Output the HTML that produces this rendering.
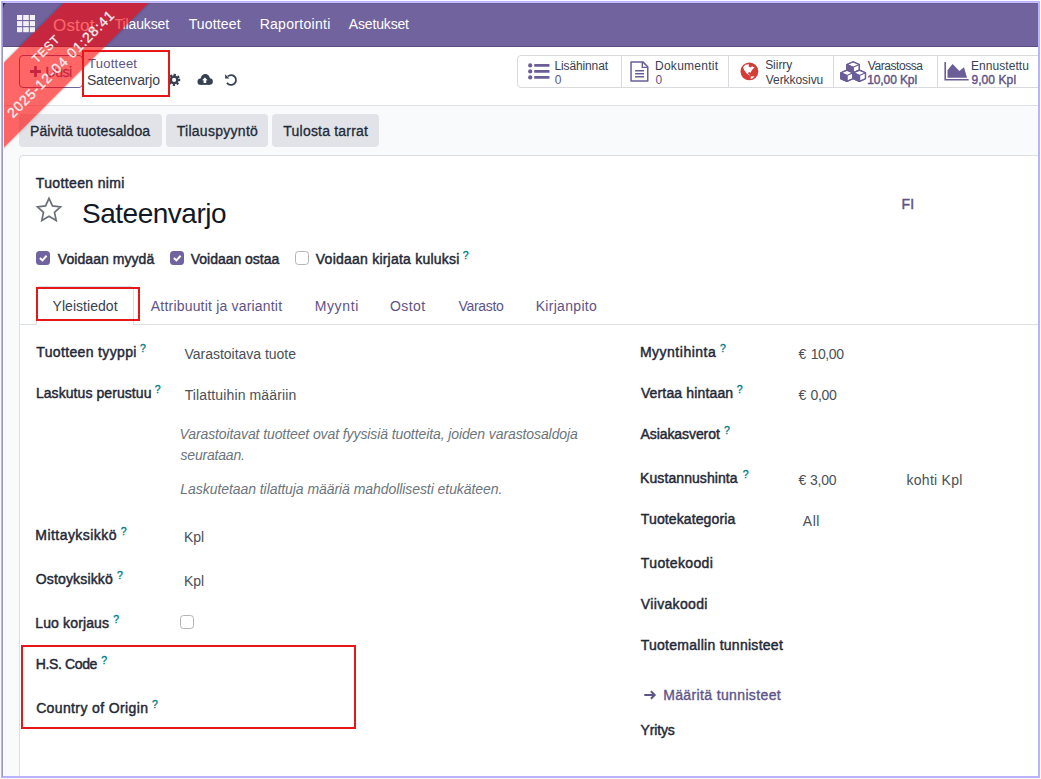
<!DOCTYPE html>
<html lang="fi">
<head>
<meta charset="utf-8">
<title>Sateenvarjo - Odoo</title>
<style>
html,body{margin:0;padding:0;background:#faf9ff;}
body{width:1041px;height:779px;position:relative;overflow:hidden;font-family:"Liberation Sans",sans-serif;}
#clip{position:absolute;left:3px;top:3px;width:1035px;height:773px;overflow:hidden;}
#stage{position:absolute;left:-3px;top:-3px;width:1041px;height:779px;}
#frame{position:absolute;left:1px;top:1px;width:1035px;height:773px;border:2px solid #b9b2ff;z-index:50;pointer-events:none;}
.abs,.t,svg{position:absolute;}
.t{white-space:nowrap;}
#nav{left:0;top:3px;width:1041px;height:44px;background:#71639e;box-sizing:border-box;border-bottom:1px solid #5a4e83;border-top:1px solid #6a5c99;}
#cp{left:0;top:47px;width:1041px;height:58px;background:#fff;border-bottom:1px solid #dcdfe3;}
#bg{left:0;top:106px;width:1041px;height:680px;background:#f9fafb;}
.sbtn{top:114px;height:33px;background:#e1e3e8;border-radius:4px;}
#sheet{left:19px;top:155px;width:1100px;height:700px;background:#fff;border:1px solid #dcdfe3;border-radius:4px;box-sizing:border-box;}
#new{left:19px;top:55px;width:63.500px;height:33px;box-sizing:border-box;border:1px solid #71639e;border-radius:4px;background:#fff;}
#stat{left:517px;top:55px;width:560px;height:33px;box-sizing:border-box;border:1px solid #d8dadd;border-radius:4px;background:#fff;}
.div{top:56px;width:1px;height:31px;background:#d8dadd;}
.red{box-sizing:border-box;border:2.300px solid #e61719;}
.cb{width:14px;height:14px;box-sizing:border-box;border-radius:3.5px;}
.cb.on{background:#71639e;}
.cb.off{background:#fff;border:1px solid #b4b4b6;}
#tabline{left:20px;top:324px;width:1030px;height:1px;background:#dcdfe3;}
#tab{left:36px;top:286px;width:98px;height:39px;box-sizing:border-box;border:1px solid #dcdfe3;border-bottom:none;background:#fff;border-radius:4px 4px 0 0;}
#ribbon{left:-97.300px;top:25.700px;width:300px;height:60px;background:rgba(255,0,0,.6);transform:rotate(-45deg);color:#f0f0f0;text-align:center;letter-spacing:.800px;-webkit-text-stroke:.300px #f0f0f0;box-shadow:0 0 3px rgba(0,0,0,.3);}
#ribbon div{position:absolute;left:0;width:300px;white-space:nowrap;}
</style>
</head>
<body>
<div id="clip"><div id="stage">

<!-- backgrounds -->
<div class="abs" id="nav"></div>
<div class="abs" id="cp"></div>
<div class="abs" id="bg"></div>

<!-- navbar apps icon -->
<svg style="left:17px;top:15px" width="18" height="18" viewBox="0 0 18 18"><g fill="#f1f0f6">
<rect x="0" y="0" width="5.2" height="5"/><rect x="6.2" y="0" width="5.6" height="5"/><rect x="12.8" y="0" width="5.2" height="5"/>
<rect x="0" y="6.1" width="5.2" height="5"/><rect x="6.2" y="6.1" width="5.6" height="5"/><rect x="12.8" y="6.1" width="5.2" height="5"/>
<rect x="0" y="12.2" width="5.2" height="5"/><rect x="6.2" y="12.2" width="5.6" height="5"/><rect x="12.8" y="12.2" width="5.2" height="5"/>
</g></svg>
<svg style="left:3px;top:3px" width="4" height="6" viewBox="0 0 4 6"><path d="M0 0H3L0.8 2L0 6Z" fill="#2b2733"/></svg>

<!-- "new" button -->
<div class="abs" id="new"></div>
<svg style="left:30px;top:66px" width="11" height="11" viewBox="0 0 11 11"><path d="M4.1 0h2.8v4.1H11v2.8H6.9V11H4.1V6.9H0V4.1h4.1z" fill="#71639e"/></svg>
<div class="t under" style="left:45.50px;top:62.02px;font-size:14px;line-height:20px;color:#71639e;letter-spacing:-0.429px;-webkit-text-stroke:0.3px #71639e;">Uusi</div>

<!-- control panel action icons -->
<svg style="left:167px;top:73px" width="14" height="14" viewBox="0 0 14 14"><g fill="none" stroke="#374151">
<circle cx="7.1" cy="6.9" r="4.9" stroke-width="2.5" stroke-dasharray="2.05 1.8" transform="rotate(-12 7.1 6.9)"/>
<circle cx="7.1" cy="6.9" r="3.3" stroke-width="2.5"/></g></svg>
<svg style="left:197px;top:73px" width="17" height="13" viewBox="0 0 17 13"><g fill="#374151"><circle cx="3.700" cy="8.650" r="3.200"/><circle cx="8.300" cy="5.700" r="4.600"/><circle cx="12.600" cy="8.600" r="3.250"/><rect x="3.700" y="6" width="8.900" height="5.850"/></g><path d="M7.850 4.500l2.750 2.800H9.200v2.700H6.600V7.300H5.100z" fill="#fff"/></svg>
<svg style="left:224px;top:73px" width="14" height="14" viewBox="0 0 14 14"><path d="M3.800 3.400A4.900 4.900 0 1 1 3.000 9.700" fill="none" stroke="#374151" stroke-width="1.8"/><path d="M1.100 1.300v4.300h4.300z" fill="#374151"/></svg>

<!-- stat buttons -->
<div class="abs" id="stat"></div>
<div class="abs div" style="left:621px"></div>
<div class="abs div" style="left:728px"></div>
<div class="abs div" style="left:833px"></div>
<div class="abs div" style="left:937px"></div>
<svg style="left:528px;top:63px" width="22" height="17" viewBox="0 0 22 17"><g fill="#6b5e98">
<circle cx="2.2" cy="2.4" r="2.1"/><circle cx="2.2" cy="8.4" r="2.1"/><circle cx="2.2" cy="14.4" r="2.1"/>
<rect x="6.2" y="1" width="15.3" height="2.8" rx=".6"/><rect x="6.2" y="7" width="15.3" height="2.8" rx=".6"/><rect x="6.2" y="13" width="15.3" height="2.8" rx=".6"/></g></svg>
<svg style="left:630px;top:61px" width="19" height="21" viewBox="0 0 19 21"><g fill="none" stroke="#6b5e98">
<path d="M1.050 0.900H12.900L17.750 5.700V19.950H1.050z" stroke-width="1.5" stroke-linejoin="round"/><path d="M12.300 1v5.400h5.300" stroke-width="1.4"/>
<path d="M5.100 9.800h8.900M5.100 12.750h8.900M5.100 15.800h8.900" stroke-width="1.4"/></g></svg>
<svg style="left:740px;top:61.600px" width="19" height="19" viewBox="0 0 19 19"><circle cx="9.400" cy="9.400" r="8.900" fill="#d63c37"/>
<path d="M3.000 5.300L5.400 2.700 9.000 2.200 8.600 4.500 10.800 5.400 11.900 4.200 14.700 5.400 12.600 7.200 11.100 9.400 10.800 10.800 9.000 10.100 7.900 11.200 9.300 12.600 10.400 13.700 7.200 11.900 4.600 8.700 3.700 6.900z" fill="#fff"/>
<path d="M10.800 14.400l3.900-.2-2.500 2.400-1.600.3z" fill="#fff"/></svg>
<svg style="left:840px;top:61px" width="27" height="21" viewBox="0 0 27 21"><g stroke="#6b5e98" stroke-width="1.25" stroke-linejoin="round"><path d="M13.10 0.70L19.30 3.50V9.10L13.10 11.90L6.90 9.10V3.50Z" fill="#fff"/><path d="M6.90 3.50L13.10 6.30V11.90L6.90 9.10Z" fill="#6b5e98"/><path d="M13.10 0.70L19.30 3.50V9.10L13.10 11.90L6.90 9.10V3.50ZM13.10 0.70L19.30 3.50L13.10 6.30L6.90 3.50ZM13.10 6.30V11.90" fill="none"/><path d="M6.90 9.10L12.90 11.80V17.70L6.90 20.40L0.90 17.70V11.80Z" fill="#fff"/><path d="M0.90 11.80L6.90 14.50V20.40L0.90 17.70Z" fill="#6b5e98"/><path d="M6.90 9.10L12.90 11.80V17.70L6.90 20.40L0.90 17.70V11.80ZM6.90 9.10L12.90 11.80L6.90 14.50L0.90 11.80ZM6.90 14.50V20.40" fill="none"/><path d="M19.50 9.10L25.50 11.80V17.70L19.50 20.40L13.50 17.70V11.80Z" fill="#fff"/><path d="M13.50 11.80L19.50 14.50V20.40L13.50 17.70Z" fill="#6b5e98"/><path d="M19.50 9.10L25.50 11.80V17.70L19.50 20.40L13.50 17.70V11.80ZM19.50 9.10L25.50 11.80L19.50 14.50L13.50 11.80ZM19.50 14.50V20.40" fill="none"/></g></svg>
<svg style="left:944px;top:62px" width="26" height="19" viewBox="0 0 26 19"><path d="M1.200 0v17.700h23.500" fill="none" stroke="#6b5e98" stroke-width="1.6"/><path d="M3.500 8.250L8.600 2.100 15.400 8.900 20.000 5.300 23.000 15.700H3.500z" fill="#6b5e98"/></svg>

<!-- action buttons -->
<div class="abs sbtn" style="left:19px;width:143px"></div>
<div class="abs sbtn" style="left:166px;width:102px"></div>
<div class="abs sbtn" style="left:272px;width:107px"></div>

<!-- form sheet -->
<div class="abs" id="sheet"></div>
<svg style="left:35px;top:196.400px" width="28" height="27" viewBox="0 0 28 27"><path d="M14 2.400l3.450 7.500 8.100 1-6.050 5.500 1.700 8.100-7.200-4.150-7.200 4.150 1.700-8.100-6.050-5.500 8.100-1z" fill="none" stroke="#6c7078" stroke-width="1.700" stroke-linejoin="miter"/></svg>
<div class="abs cb on" style="left:36px;top:251px"></div>
<svg style="left:36px;top:251px" width="14" height="14" viewBox="0 0 14 14"><path d="M3.900 7.000L6.400 9.450 10.600 4.750" fill="none" stroke="#fff" stroke-width="1.900" stroke-linecap="butt" stroke-linejoin="miter"/></svg>
<div class="abs cb on" style="left:169.5px;top:251px"></div>
<svg style="left:169.5px;top:251px" width="14" height="14" viewBox="0 0 14 14"><path d="M3.900 7.000L6.400 9.450 10.600 4.750" fill="none" stroke="#fff" stroke-width="1.900" stroke-linecap="butt" stroke-linejoin="miter"/></svg>
<div class="abs cb off" style="left:295px;top:251px"></div>
<div class="abs cb off" style="left:180px;top:615px"></div>
<div class="abs" id="tabline"></div>
<div class="abs" id="tab"></div>
<svg style="left:644px;top:689px" width="13" height="12" viewBox="0 0 13 12"><path d="M0.300 6H10.800M6.900 2.200L10.700 6 6.900 9.800" fill="none" stroke="#5e5387" stroke-width="2" stroke-linejoin="miter"/></svg>

<div class="t" style="left:52.97px;top:13.98px;font-size:17px;line-height:24px;color:#ffffff;letter-spacing:0.210px;">Ostot</div>
<div class="t" style="left:114.69px;top:14.02px;font-size:14px;line-height:20px;color:#ffffff;letter-spacing:-0.146px;">Tilaukset</div>
<div class="t" style="left:188.69px;top:14.02px;font-size:14px;line-height:20px;color:#ffffff;letter-spacing:0.152px;">Tuotteet</div>
<div class="t" style="left:259.64px;top:14.02px;font-size:14px;line-height:20px;color:#ffffff;letter-spacing:0.294px;">Raportointi</div>
<div class="t" style="left:348.78px;top:14.02px;font-size:14px;line-height:20px;color:#ffffff;letter-spacing:-0.154px;">Asetukset</div>
<div class="t" style="left:88.12px;top:55.02px;font-size:13px;line-height:18px;color:#5e5387;letter-spacing:0.234px;">Tuotteet</div>
<div class="t" style="left:86.89px;top:70.02px;font-size:14px;line-height:20px;color:#374151;letter-spacing:-0.150px;">Sateenvarjo</div>
<div class="t" style="left:554.48px;top:58.02px;font-size:12px;line-height:17px;color:#374151;letter-spacing:-0.129px;">Lisähinnat</div>
<div class="t" style="left:554.78px;top:72.02px;font-size:12px;line-height:17px;color:#5e5387;">0</div>
<div class="t" style="left:655.03px;top:58.02px;font-size:12px;line-height:17px;color:#374151;letter-spacing:0.257px;">Dokumentit</div>
<div class="t" style="left:655.49px;top:72.02px;font-size:12px;line-height:17px;color:#5e5387;">0</div>
<div class="t" style="left:765.16px;top:57.02px;font-size:12px;line-height:17px;color:#374151;letter-spacing:-0.037px;">Siirry</div>
<div class="t" style="left:765.75px;top:72.02px;font-size:12px;line-height:17px;color:#374151;letter-spacing:-0.059px;">Verkkosivu</div>
<div class="t" style="left:867.75px;top:58.02px;font-size:12px;line-height:17px;color:#374151;letter-spacing:-0.440px;">Varastossa</div>
<div class="t" style="left:867.26px;top:72.02px;font-size:12px;line-height:17px;color:#5e5387;letter-spacing:-0.113px;-webkit-text-stroke:0.4px #5e5387;">10,00 Kpl</div>
<div class="t" style="left:971.03px;top:58.02px;font-size:12px;line-height:17px;color:#374151;letter-spacing:0.053px;">Ennustettu</div>
<div class="t" style="left:971.40px;top:72.02px;font-size:12px;line-height:17px;color:#5e5387;letter-spacing:0.090px;-webkit-text-stroke:0.4px #5e5387;">9,00 Kpl</div>
<div class="t" style="left:30.05px;top:121.02px;font-size:14px;line-height:20px;color:#1f2937;letter-spacing:0.099px;-webkit-text-stroke:0.3px #1f2937;">Päivitä tuotesaldoa</div>
<div class="t" style="left:176.73px;top:121.02px;font-size:14px;line-height:20px;color:#1f2937;letter-spacing:0.276px;-webkit-text-stroke:0.3px #1f2937;">Tilauspyyntö</div>
<div class="t" style="left:283.36px;top:121.02px;font-size:14px;line-height:20px;color:#1f2937;letter-spacing:0.204px;-webkit-text-stroke:0.3px #1f2937;">Tulosta tarrat</div>
<div class="t" style="left:35.84px;top:173.02px;font-size:14px;line-height:20px;color:#1f2937;letter-spacing:0.357px;-webkit-text-stroke:0.45px #1f2937;">Tuotteen nimi</div>
<div class="t" style="left:81.96px;top:194.02px;font-size:28px;line-height:39px;color:#111827;letter-spacing:-0.476px;">Sateenvarjo</div>
<div class="t" style="left:901.49px;top:194.02px;font-size:14px;line-height:20px;color:#5e5387;letter-spacing:0.096px;-webkit-text-stroke:0.45px #5e5387;">FI</div>
<div class="t" style="left:57.84px;top:249.02px;font-size:14px;line-height:20px;color:#1f2937;letter-spacing:0.053px;-webkit-text-stroke:0.45px #1f2937;">Voidaan myydä</div>
<div class="t" style="left:190.84px;top:249.02px;font-size:14px;line-height:20px;color:#1f2937;letter-spacing:-0.032px;-webkit-text-stroke:0.45px #1f2937;">Voidaan ostaa</div>
<div class="t" style="left:315.84px;top:249.02px;font-size:14px;line-height:20px;color:#1f2937;letter-spacing:0.229px;-webkit-text-stroke:0.45px #1f2937;">Voidaan kirjata kuluksi</div>
<div class="t" style="left:462.67px;top:247.99px;font-size:10.5px;line-height:15px;color:#017e84;-webkit-text-stroke:0.35px #017e84;">?</div>
<div class="t" style="left:52.51px;top:296.02px;font-size:14px;line-height:20px;color:#374151;letter-spacing:0.050px;">Yleistiedot</div>
<div class="t" style="left:150.85px;top:296.02px;font-size:14px;line-height:20px;color:#5e5387;letter-spacing:0.189px;">Attribuutit ja variantit</div>
<div class="t" style="left:314.67px;top:296.02px;font-size:14px;line-height:20px;color:#5e5387;letter-spacing:0.633px;">Myynti</div>
<div class="t" style="left:390.02px;top:296.02px;font-size:14px;line-height:20px;color:#5e5387;letter-spacing:0.386px;">Ostot</div>
<div class="t" style="left:458.56px;top:296.02px;font-size:14px;line-height:20px;color:#5e5387;letter-spacing:-0.327px;">Varasto</div>
<div class="t" style="left:535.67px;top:296.02px;font-size:14px;line-height:20px;color:#5e5387;letter-spacing:0.308px;">Kirjanpito</div>
<div class="t" style="left:36.33px;top:342.02px;font-size:14px;line-height:20px;color:#1f2937;letter-spacing:0.348px;-webkit-text-stroke:0.45px #1f2937;">Tuotteen tyyppi</div>
<div class="t" style="left:140.06px;top:340.99px;font-size:10.5px;line-height:15px;color:#017e84;-webkit-text-stroke:0.35px #017e84;">?</div>
<div class="t" style="left:184.55px;top:344.02px;font-size:14px;line-height:20px;color:#495057;letter-spacing:-0.022px;">Varastoitava tuote</div>
<div class="t" style="left:35.89px;top:383.02px;font-size:14px;line-height:20px;color:#1f2937;letter-spacing:0.074px;-webkit-text-stroke:0.45px #1f2937;">Laskutus perustuu</div>
<div class="t" style="left:154.85px;top:381.99px;font-size:10.5px;line-height:15px;color:#017e84;-webkit-text-stroke:0.35px #017e84;">?</div>
<div class="t" style="left:184.69px;top:385.02px;font-size:14px;line-height:20px;color:#495057;letter-spacing:0.133px;">Tilattuihin määriin</div>
<div class="t" style="left:179.48px;top:424.02px;font-size:14px;line-height:20px;color:#6c757d;font-style:italic;letter-spacing:-0.097px;">Varastoitavat tuotteet ovat fyysisiä tuotteita, joiden varastosaldoja</div>
<div class="t" style="left:180.55px;top:445.02px;font-size:14px;line-height:20px;color:#6c757d;font-style:italic;letter-spacing:-0.198px;">seurataan.</div>
<div class="t" style="left:180.33px;top:479.02px;font-size:14px;line-height:20px;color:#6c757d;font-style:italic;letter-spacing:-0.062px;">Laskutetaan tilattuja määriä mahdollisesti etukäteen.</div>
<div class="t" style="left:35.27px;top:525.02px;font-size:14px;line-height:20px;color:#1f2937;letter-spacing:0.455px;-webkit-text-stroke:0.45px #1f2937;">Mittayksikkö</div>
<div class="t" style="left:120.74px;top:523.99px;font-size:10.5px;line-height:15px;color:#017e84;-webkit-text-stroke:0.35px #017e84;">?</div>
<div class="t" style="left:184.06px;top:527.02px;font-size:14px;line-height:20px;color:#495057;letter-spacing:-0.092px;">Kpl</div>
<div class="t" style="left:35.71px;top:569.02px;font-size:14px;line-height:20px;color:#1f2937;letter-spacing:0.166px;-webkit-text-stroke:0.45px #1f2937;">Ostoyksikkö</div>
<div class="t" style="left:117.06px;top:567.99px;font-size:10.5px;line-height:15px;color:#017e84;-webkit-text-stroke:0.35px #017e84;">?</div>
<div class="t" style="left:184.06px;top:571.02px;font-size:14px;line-height:20px;color:#495057;letter-spacing:-0.092px;">Kpl</div>
<div class="t" style="left:35.27px;top:613.02px;font-size:14px;line-height:20px;color:#1f2937;letter-spacing:0.138px;-webkit-text-stroke:0.45px #1f2937;">Luo korjaus</div>
<div class="t" style="left:113.35px;top:611.99px;font-size:10.5px;line-height:15px;color:#017e84;-webkit-text-stroke:0.35px #017e84;">?</div>
<div class="t" style="left:35.69px;top:654.02px;font-size:14px;line-height:20px;color:#1f2937;letter-spacing:-0.368px;-webkit-text-stroke:0.45px #1f2937;">H.S. Code</div>
<div class="t" style="left:101.35px;top:652.99px;font-size:10.5px;line-height:15px;color:#017e84;-webkit-text-stroke:0.35px #017e84;">?</div>
<div class="t" style="left:36.13px;top:698.02px;font-size:14px;line-height:20px;color:#1f2937;letter-spacing:0.373px;-webkit-text-stroke:0.45px #1f2937;">Country of Origin</div>
<div class="t" style="left:152.06px;top:696.99px;font-size:10.5px;line-height:15px;color:#017e84;-webkit-text-stroke:0.35px #017e84;">?</div>
<div class="t" style="left:639.90px;top:342.02px;font-size:14px;line-height:20px;color:#1f2937;letter-spacing:0.508px;-webkit-text-stroke:0.45px #1f2937;">Myyntihinta</div>
<div class="t" style="left:720.06px;top:340.99px;font-size:10.5px;line-height:15px;color:#017e84;-webkit-text-stroke:0.35px #017e84;">?</div>
<div class="t" style="left:798.40px;top:344.02px;font-size:14px;line-height:20px;color:#495057;letter-spacing:0.000px;word-spacing:0.559px;">€ <span style="letter-spacing:-0.420px">10,00</span></div>
<div class="t" style="left:640.88px;top:383.02px;font-size:14px;line-height:20px;color:#1f2937;letter-spacing:0.153px;-webkit-text-stroke:0.45px #1f2937;">Vertaa hintaan</div>
<div class="t" style="left:736.67px;top:381.99px;font-size:10.5px;line-height:15px;color:#017e84;-webkit-text-stroke:0.35px #017e84;">?</div>
<div class="t" style="left:798.40px;top:385.02px;font-size:14px;line-height:20px;color:#495057;letter-spacing:0.000px;word-spacing:0.504px;">€ <span style="letter-spacing:-0.387px">0,00</span></div>
<div class="t" style="left:640.47px;top:424.02px;font-size:14px;line-height:20px;color:#1f2937;letter-spacing:-0.074px;-webkit-text-stroke:0.45px #1f2937;">Asiakasverot</div>
<div class="t" style="left:724.06px;top:422.99px;font-size:10.5px;line-height:15px;color:#017e84;-webkit-text-stroke:0.35px #017e84;">?</div>
<div class="t" style="left:640.10px;top:468.02px;font-size:14px;line-height:20px;color:#1f2937;letter-spacing:0.076px;-webkit-text-stroke:0.45px #1f2937;">Kustannushinta</div>
<div class="t" style="left:742.67px;top:466.99px;font-size:10.5px;line-height:15px;color:#017e84;-webkit-text-stroke:0.35px #017e84;">?</div>
<div class="t" style="left:798.40px;top:470.02px;font-size:14px;line-height:20px;color:#495057;letter-spacing:0.000px;word-spacing:-0.154px;">€ <span style="letter-spacing:-0.201px">3,00</span></div>
<div class="t" style="left:906.58px;top:470.02px;font-size:14px;line-height:20px;color:#495057;letter-spacing:0.251px;">kohti Kpl</div>
<div class="t" style="left:640.84px;top:509.02px;font-size:14px;line-height:20px;color:#1f2937;letter-spacing:0.115px;-webkit-text-stroke:0.45px #1f2937;">Tuotekategoria</div>
<div class="t" style="left:802.78px;top:511.02px;font-size:14px;line-height:20px;color:#495057;letter-spacing:0.570px;">All</div>
<div class="t" style="left:640.84px;top:553.02px;font-size:14px;line-height:20px;color:#1f2937;letter-spacing:0.366px;-webkit-text-stroke:0.45px #1f2937;">Tuotekoodi</div>
<div class="t" style="left:640.84px;top:594.02px;font-size:14px;line-height:20px;color:#1f2937;letter-spacing:0.335px;-webkit-text-stroke:0.45px #1f2937;">Viivakoodi</div>
<div class="t" style="left:640.68px;top:635.02px;font-size:14px;line-height:20px;color:#1f2937;letter-spacing:0.270px;-webkit-text-stroke:0.45px #1f2937;">Tuotemallin tunnisteet</div>
<div class="t" style="left:663.16px;top:685.02px;font-size:14px;line-height:20px;color:#5e5387;letter-spacing:0.367px;-webkit-text-stroke:0.35px #5e5387;">Määritä tunnisteet</div>
<div class="t" style="left:640.45px;top:720.02px;font-size:14px;line-height:20px;color:#1f2937;letter-spacing:-0.133px;-webkit-text-stroke:0.45px #1f2937;">Yritys</div>

<!-- environment ribbon -->
<div class="abs" id="ribbon"><div style="top:10px;font-size:12px;line-height:20px">TEST</div><div style="top:31px;font-size:14px;line-height:20px">2025-12-04 01:28:41</div></div>

<!-- highlight boxes -->
<div class="abs red" style="left:82.300px;top:49.800px;width:88.200px;height:47.200px"></div>

<div class="abs red" style="left:35.800px;top:286.800px;width:104.200px;height:34.200px"></div>
<div class="abs red" style="left:20.600px;top:644.600px;width:335px;height:84.600px"></div>

</div></div>
<div id="frame"></div>
<div class="abs" style="left:2px;top:2px;width:1037px;height:1px;background:#c9c0ff;z-index:51"></div>
<div class="abs" style="left:2px;top:2px;width:1px;height:775px;background:#9c94d4;z-index:52"></div>
<div class="abs" style="left:3px;top:47px;width:1px;height:729px;background:#fefefe;z-index:49"></div>
</body>
</html>
